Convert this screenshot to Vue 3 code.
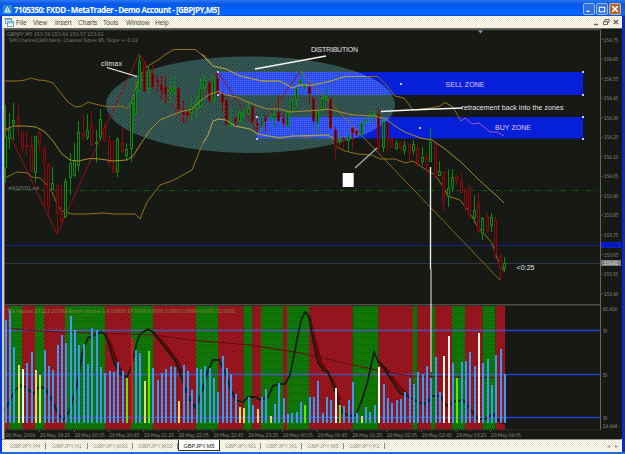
<script setup>
const menus = ['File', 'View', 'Insert', 'Charts', 'Tools', 'Window', 'Help']
const tabs = [
  { name: 'GBPJPY,H4', w: 42 }, { name: 'GBPJPY,H1', w: 42 }, { name: 'GBPJPY,M30', w: 45 },
  { name: 'GBPJPY,M15', w: 45 }, { name: 'GBPJPY,M5', w: 42, active: true },
  { name: 'GBPJPY,M1', w: 41 }, { name: 'GBPJPY,M1', w: 41 }, { name: 'GBPJPY,M5', w: 42 },
  { name: 'GBPJPY,H1', w: 41 },
]

const STEP = 4.345
const barX = (i) => Math.floor(5 + i * STEP) + 0.5

// high, low, body top, body bottom, direction (g / r)
const candles = `105 183 137 168 g|113 149 129 139 g|103 140 120 124 g|104 136 118 127 r|131 153 133 149 r
132 155 145 147 r|137 172 146 171 r|136 183 136 173 g|129 153 133 143 r|147 208 148 163 r
163 217 165 207 r|167 190 183 190 g|184 234 185 214 r|185 226 213 221 r|178 218 181 217 g
153 195 163 178 g|143 177 161 176 g|121 172 132 166 g|115 140 133 136 r|114 140 130 138 g
111 146 126 145 r|130 163 142 144 g|109 140 119 138 g|123 142 128 141 r|136 167 141 163 r
140 173 166 173 r|137 177 139 172 g|128 154 142 152 r|143 160 149 156 g|98 162 103 149 g
80 115 90 114 g|55 92 61 91 g|60 92 63 91 r|65 93 70 89 g|65 88 74 87 r
75 92 80 82 r|76 100 85 90 r|75 104 87 94 r|78 103 88 92 g|77 95 88 93 g
87 112 88 110 r|100 123 111 115 r|108 118 112 115 r|97 120 106 113 g|95 118 102 108 g
78 108 88 107 g|75 92 80 87 g|81 103 83 101 r|75 103 78 100 g|72 97 78 96 r
92 112 93 103 r|95 125 100 124 r|110 127 120 126 g|117 127 118 122 r|110 122 112 121 g
108 122 113 115 g|100 115 108 114 g|106 125 106 122 r|115 133 123 126 r|114 132 117 127 g
115 132 118 121 r|113 122 116 118 g|110 128 115 119 g|95 122 112 121 r|113 127 118 124 r
110 127 112 127 g|98 113 100 112 g|86 107 88 100 g|72 84 80 84 g|84 90 85 88 g
83 104 87 94 r|97 123 98 121 r|110 133 112 123 g|94 112 98 110 g|87 101 97 100 g
97 130 99 128 r|127 159 130 147 r|135 145 139 141 g|137 150 138 140 r|133 151 136 141 g
127 150 128 133 r|130 136 131 134 r|122 137 123 135 g|115 125 120 122 g|111 122 115 117 g
111 122 114 118 g|108 153 114 149 r|119 152 121 148 g|122 152 123 140 r|138 148 138 148 r
140 150 143 149 g|142 150 142 149 r|141 155 145 151 g|143 163 144 153 r|140 155 144 151 g
144 167 148 163 r|147 165 157 162 g|155 174 156 166 r|128 162 142 162 g|142 178 143 177 r
161 176 171 176 g|171 212 172 201 r|169 207 188 197 g|169 192 177 188 g|175 185 176 181 r
171 193 182 193 r|188 212 191 208 r|185 220 187 215 r|195 223 210 218 g|192 233 203 232 r
217 240 218 234 g|213 233 216 231 r|213 232 217 226 g|217 258 220 255 r|253 280 256 268 r
257 272 263 268 g`.split(/[|\n]/).map((row, i) => {
  const [high, low, top, bottom, dir] = row.split(' ')
  return { x: barX(i), high: +high, low: +low, top: +top, bottom: +bottom, dir }
})

// volume bar heights; suffix: w climax, y low volume, l churn, r spike
const volumes = `75 45 155 210y 222w 203 172 225y 240y 165 212 225 150 120 143 63 105 150 147 207 100 105 215 233
228 230 200 228 250l 130r 165 173 258y 168l 220 255 233 222 212 215 318y 210 227 285 220 222 213 220 250 290
183 220 237 298 337y 340y 305 330 342y 305 282 363y 327 265 308 357 355 350 320 330l 305 305 258 353 305 315
278w 330l 333 315 260 355 362y 337 350 330 215w 268 310 325 315 312 290 248 268 230 237 213 250 187 290 183w
122w 203 250l 200 197 170 213 113w 205 192 270 180 162 238`.split(/\s+/).map((v, i) => {
  const y = 295 + Math.round(parseInt(v) / 3)
  return { x: barX(i) - 0.5, y, h: 423 - y, kind: v.replace(/\d/g, '') || 'b' }
})

const edges = [5, 9, 22, 35, 44, 65, 105, 131, 153, 196, 218, 243.5, 252.5, 261, 283, 287, 309, 352.5, 378.5,
  413, 417.5, 431, 435, 452, 465, 482.5, 495.5, 505]
const trends = edges.slice(1).map((x, i) => ({ x: edges[i], w: x - edges[i], up: i % 2 === 1 }))

const prices = Array.from({ length: 14 }, (_, i) => ({
  label: (154.75 - i * 0.1).toFixed(2), y: 41.5 + i * 19.55,
}))
const times = ['28 May 2009', '28 May 19:25', '28 May 20:05', '28 May 20:45', '28 May 21:25', '28 May 22:05',
  '28 May 22:45', '28 May 23:25', '29 May 00:05', '29 May 00:45', '29 May 01:25', '29 May 02:05',
  '29 May 02:45', '29 May 03:25', '29 May 04:05'].map((label, i) => ({ label, x: 5 + i * 34.7 }))
const levels = [{ y: 330.5, label: '70' }, { y: 374.5, label: '50' }, { y: 417.5, label: '30' }]

const upper = '5,81 18,81 25,80 31,78 38,80 45,80.5 53,83 60,92 67,101 75,107 82,106 88,102 95,104 103,106 112,107 120,106 127,108.5 131,102 135,92 139,76 148,66 158,60 166,54 174,49.5 195,49.5 201,54 205,56 213,66 226,69 240,76 262,81 280,81 287,84 292,88 300,85 313,85 331,81 345,76.5 378,76.5 388,87 395,96 404,98 413,110 430,108 440,106 445,102.5 453,107 461,121'
const upperEnd = '461,121 465,118 472,124 479,123 490,132 497,132 504,136'
const middle = '5,130 13,126 25,126 36,127 45,132 53,141 62,154 70,160 78,161 90,158.5 100,159 113,161 127,160 133,156 140,145 150,130 160,120 172,115 180,112 192,109 200,101 210,94 218,91.5 226,95 237,97 245,101 258,106 267,109 280,109 290,112 305,111 320,110 328,109 340,112 353,115 375,116 386,119 395,126 405,132 420,138 432,140 445,149 462,163 478,179 490,190 497,196 504,203'
const lower = '5,178 17,172 28,173 32,177 40,178 46,184 52,192 58,206 62,211 72,214 87,214 103,213 115,214 135,214 140,219 147,202 160,185 174,180 192,170 198,155 203,143 208,135 213,121 219,119 226,120 235,126 250,129 258,134 268,136 280,138 292,136 305,137 315,136 328,135 333,138 337,147 345,151 358,154 372,155 380,159 395,159 405,163 413,161 425,169 435,175 442,185 448,196 460,200 468,210 478,227 492,243 497,258 504,271'
const zigzag = '5,125 57,234 139,54 184,123 218,72 257,131 300,72'
const osc = '5,410 10,400 15,390 22,385 28,389 33,394 40,386 46,390 52,400 58,414 63,420 70,410 77,385 83,350 88,338 95,335 101,332 105,334 109,345 114,363 120,374 127,377 131,368 137,342 140,334 148,329 153,332 162,344 170,354 176,362 183,382 190,400 196,408 203,388 208,370 213,360 219,360 225,372 231,390 236,400 243,402 248,397 255,397 261,400 268,397 273,386 279,384 285,384 290,375 296,345 301,320 305,312 309,316 313,340 318,363 323,370 328,372 333,385 338,402 343,413 350,416 356,415 362,400 368,380 374,352 378,361 385,370 395,386 400,393 410,397 420,403 426,404 432,396 440,396 447,406 455,401 463,400 470,409 478,419 485,419 493,414 500,422 505,424'
const falls = ['105,334 111,345 117,363 122,374 128,376', '153,332 164,344 172,354 178,362 184,378', '309,316 315,340 321,363 327,371 332,380 340,400', '378,361 387,370 397,384 407,395']
const average = '5,328 25,330 60,332 125,334 155,335 190,340 250,345 300,353 340,362 380,371 410,376 450,377 505,378'
</script>

<template>
  <div class="window">
    <header class="titlebar">
      <svg class="logo" width="9" height="9" viewBox="0 0 9 9">
        <rect width="9" height="9" rx="1" fill="#2c8cc8" />
        <path d="M4.5 1L6 4L8 7.5H1L3 4Z" fill="#e8f8ff" />
        <path d="M4.5 3V6M2.5 6H6.5" stroke="#48a8d8" stroke-width=".8" />
      </svg>
      <span class="title">7105350: FXDD - MetaTrader - Demo Account - [GBPJPY,M5]</span>
      <div class="controls">
        <svg class="ctl" viewBox="0 0 11 11"><path d="M3 8H6" stroke="#fff" stroke-width="1.6" /></svg>
        <svg class="ctl" viewBox="0 0 11 11"><path d="M2.5 3.5H8.5M2.5 3V8.5H8.5V3" fill="none" stroke="#fff" stroke-width="1.2" /></svg>
        <svg class="ctl close" viewBox="0 0 11 11"><path d="M2.5 2.5L8.5 8.5M8.5 2.5L2.5 8.5" stroke="#fff" stroke-width="1.7" /></svg>
      </div>
    </header>

    <nav class="menubar">
      <svg class="doc" width="9" height="9" viewBox="0 0 9 9">
        <rect x=".5" y=".5" width="6" height="5" fill="#fff" stroke="#6ba4e0" />
        <rect x="2.5" y="3.5" width="6" height="5" fill="#eef6ff" stroke="#6ba4e0" />
        <path d="M1 1.5H6M3 4.8H8" stroke="#6ba4e0" />
      </svg>
      <span v-for="m in menus" :key="m" class="menu" :class="'menu-' + m.toLowerCase()">{{ m }}</span>
      <svg class="mdi" width="28" height="8" viewBox="0 0 28 8" fill="none" stroke="#666655">
        <path d="M2 6.5H6" stroke-width="1.4" />
        <path d="M13 3V1.5H17V4.5H15.5M11.5 3.5H15.5V6.5H11.5Z" />
        <path d="M22 2L26 6M26 2L22 6" stroke-width="1.3" />
      </svg>
    </nav>

    <svg class="chart" width="618" height="411" viewBox="4 28 618 411">
      <defs>
        <pattern id="oval" width="4" height="4" patternUnits="userSpaceOnUse">
          <rect width="4" height="4" fill="#345650" />
          <path d="M0 0h1v1h-1zM2 2h1v1h-1z" fill="#203440" />
        </pattern>
        <pattern id="ovalZone" width="2" height="2" patternUnits="userSpaceOnUse">
          <rect width="2" height="2" fill="#2c48f4" />
          <path d="M0 0h1v1h-1z" fill="#4870dc" />
        </pattern>
        <pattern id="up" width="4" height="4" patternUnits="userSpaceOnUse">
          <rect width="4" height="4" fill="#068006" />
          <path d="M0 0h1v1h-1zM2 0h1v1h-1zM1 2h1v1h-1zM3 2h1v1h-1z" fill="#284c00" />
        </pattern>
        <pattern id="down" width="4" height="4" patternUnits="userSpaceOnUse">
          <rect width="4" height="4" fill="#8e141c" />
          <path d="M0 0h1v1h-1zM2 2h1v1h-1z" fill="#c41c2c" />
        </pattern>
        <clipPath id="zones"><path d="M217 72H583V95H217ZM257 117H583V138.5H257Z" /></clipPath>
      </defs>

      <rect x="4" y="28" width="618" height="411" fill="#171915" />
      <path d="M4.5 439V28.5H622" class="frame" />
      <path d="M5 29.7H600.5V430M5 304.8H600.5" class="frame" />
      <path d="M478 30.5H483L480.5 33.5Z" fill="#7898d0" />

      <path d="M217 72H583V95H217ZM257 117H583V138.5H257Z" fill="#0520d8" />
      <ellipse cx="250.5" cy="104.7" rx="144.5" ry="48.3" fill="url(#oval)" />
      <ellipse cx="250.5" cy="104.7" rx="144.5" ry="48.3" fill="url(#ovalZone)" clip-path="url(#zones)" />

      <path d="M5 190.5H600" stroke="#0a3420" stroke-dasharray="4 2" />
      <path d="M15 190.5H600" stroke="#1c6c08" stroke-dasharray="1.5 .5 1.5 9.5" />
      <path d="M5 245.5H600" stroke="#0c2cf8" stroke-dasharray="1 1" />
      <path d="M5 263.5H600" stroke="#303846" />

      <g class="thin">
        <polyline :points="zigzag" stroke="#941018" />
        <path d="M300 71L500 280" stroke="#8c6818" />
        <polyline :points="upper" class="band" />
        <polyline :points="upperEnd" stroke="#a058c8" />
        <polyline :points="lower" class="band" />
      </g>
      <g v-for="(c, i) in candles" :key="'c' + i" :class="['candle', c.dir, { solid: i > 29 && i < 90 }]">
        <path :d="`M${c.x} ${c.high}V${c.top}M${c.x} ${c.bottom}V${c.low}`" />
        <rect :x="c.x - 1" :y="c.top + 0.5" width="2" :height="Math.max(c.bottom - c.top - 1, 1)" />
      </g>
      <polyline :points="middle" class="band mid" />
      <!-- bands read lighter over the ellipse -->
      <path d="M201 54L213 66L226 69L240 76L262 81H280L292 88L300 85H313L331 81L345 76.5H366" class="band pale" />
      <path d="M203 143L208 135L213 121L219 119L226 120L235 126L250 129L258 134L280 138L292 136L328 135L333 138" class="band pale" />

      <g class="pointer">
        <path d="M107 67.5L137 76.5M255 69L326 56M381 111.5L410 110L462 108" />
        <path d="M355 168L377 148" stroke="#aaa" />
        <path d="M430.5 167V269" />
        <path d="M431 269V372" stroke="#bab6bc" />
      </g>
      <rect x="342.7" y="173" width="11" height="14" fill="#fff" />
      <path d="M582 71h2v2h-2zM582 94h2v2h-2zM582 116h2v2h-2zM582 138h2v2h-2zM400 83h2v2h-2zM419 127h2v2h-2zM217 71h2v2h-2zM217 94h2v2h-2zM256 116h2v2h-2zM256 138h2v2h-2z" fill="#c8c8ff" />

      <g class="note">
        <text x="101" y="65.5" textLength="21">climax</text>
        <text x="311" y="52" textLength="47">DISTRIBUTION</text>
        <text x="445.5" y="86.5" textLength="39" class="zone">SELL ZONE</text>
        <text x="495" y="130.3" textLength="36" class="zone">BUY ZONE</text>
        <text x="461.5" y="109.7" textLength="102">retracement back into the zones</text>
        <text x="516.5" y="269.5" textLength="18">&lt;0:25</text>
      </g>
      <g class="tiny">
        <text x="7" y="36" textLength="97">GBPJPY,M5  153.59 153.64 153.57 153.61</text>
        <text x="9" y="41.7" textLength="129">SHI Channel(240 bars). Channel Size= 95, Slope = -0.12</text>
        <text x="8" y="190" textLength="31">#9325031 sell</text>
      </g>

      <rect v-for="t in trends" :key="t.x" :x="t.x" y="306" :width="t.w" height="123.5" :fill="t.up ? 'url(#up)' : 'url(#down)'" />
      <polyline v-for="f in falls" :key="f" :points="f" class="fall" />
      <path d="M5 330.5H505M5 374.5H505M5 417.5H505" class="level over" />
      <path d="M505 330.5H600M505 374.5H600M505 417.5H600" class="level" />
      <polyline :points="average" class="average" />
      <polyline :points="osc" class="osc" />
      <rect v-for="v in volumes" :key="v.x" :x="v.x" :y="v.y" width="2" :height="v.h" :class="['vol', v.kind]" />
      <path d="M431 304V372" stroke="#bab6bc" stroke-width="1.5" />
      <path d="M5 430H600.5" stroke="#44443c" stroke-dasharray="1 1" />

      <g class="tiny">
        <text x="7" y="313" class="info" textLength="228">TDI Volume 27.213 27.664  Better Volume 1.4 0.0000 87.0000 0.0000 0.0000 0.0000 0.0000 51.0000</text>
        <g v-for="p in prices" :key="p.label">
          <path :d="`M600 ${p.y - 2}h3`" stroke="#55554c" />
          <text x="603.5" :y="p.y" textLength="15">{{ p.label }}</text>
        </g>
        <text x="602.5" y="311" textLength="15">81.416</text>
        <text v-for="l in levels" :key="l.label" x="602.5" :y="l.y + 2" textLength="5">{{ l.label }}</text>
        <text x="602.5" y="427.5" textLength="15">24.444</text>
        <g v-for="t in times" :key="t.label">
          <path :d="`M${t.x} 430v2`" stroke="#55554c" />
          <text :x="t.x" y="437" textLength="30.5">{{ t.label }}</text>
        </g>
      </g>
      <rect x="601" y="242" width="20" height="6" fill="#0520d8" />
      <text x="603.5" y="247" class="tag bid" textLength="15">153.70</text>
      <rect x="601" y="260" width="20" height="6" fill="#7c7c7c" />
      <text x="603.5" y="265.2" class="tag" textLength="15">153.61</text>
    </svg>

    <footer class="tabs">
      <span v-for="(t, i) in tabs" :key="i" class="tab" :class="{ active: t.active }" :style="{ width: t.w + 'px' }">{{ t.name }}</span>
      <span class="arrows"><i>◂</i><i>▸</i></span>
    </footer>
  </div>
</template>

<style>
body { background: #0a3ee0; overflow: hidden; }
</style>

<style scoped>
.window {
  display: flex; flex-direction: column; box-sizing: border-box;
  width: 625px; height: 454px; padding: 0 3px 2px 2px;
  background: linear-gradient(90deg, #0838dc 0 2px, #d8ccb0 2px 4px, transparent 4px 621px, #f4f4f4 621px 622px, #0828d0 622px) 0 0 / 100% 452px no-repeat, #1c6ce4;
  font-family: "Liberation Sans", Arial, sans-serif;
}
.titlebar {
  display: flex; align-items: center; flex: none; height: 16px; margin: 0 -3px 0 -2px;
  padding: 2px 4px 0 3px; box-sizing: border-box;
  background: linear-gradient(#2c78f0, #0858e8 25%, #0560f8 60%, #0868ff 88%, #0448c8);
}
.title {
  margin-left: 2px; font: bold 8px "Open Sans", "Liberation Sans", sans-serif;
  letter-spacing: -0.49px; color: #fff; white-space: pre;
}
.controls { display: flex; gap: 1px; margin-left: auto; }
.ctl {
  width: 12px; height: 12px; box-sizing: border-box; border: 1px solid #98b8f4;
  border-radius: 2px; background: #3070e4;
}
.ctl.close { background: #aa6838; border-color: #d8b090; }
.menubar {
  display: flex; align-items: center; flex: none; height: 12px; padding: 0 2px 0 3px;
  background: repeating-conic-gradient(#fffff8 0 25%, #eee6d0 0 50%) 0 0 / 2px 2px;
  font-size: 6.6px; color: #48483e;
}
.menu { width: 23px; white-space: nowrap; }
.menu-file { margin-left: 2px; width: 17px; }
.menu-view { width: 22px; }
.menu-charts { width: 25px; }
.menu-window { width: 29px; }
.mdi { margin-left: auto; }
.chart { display: block; flex: none; margin-left: 2px; }
.frame { fill: none; stroke: #66665f; stroke-width: 1; }
.thin { fill: none; stroke-width: 1; }
.band { fill: none; stroke: #94701a; stroke-width: 1; }
.mid { stroke: #a88c2c; }
.pale { stroke: #a4a460; }
.candle { stroke-width: 1; fill: #171915; }
.candle.g { stroke: #088c0c; }
.candle.r { stroke: #8c060a; }
.candle.solid.g { fill: #0a3c10; }
.candle.solid.r { fill: #3c0a10; }
.pointer { fill: none; stroke: #f4f4f4; stroke-width: 1.3; }
.note { font-size: 7px; fill: #e4e4e8; }
.zone { fill: #e0c8ff; }
.tiny { font: 5px "DejaVu Sans", sans-serif; fill: #7c7c74; }
.info { fill: #8c8440; }
.tag { font: 5px "DejaVu Sans", sans-serif; fill: #ddd; }
.tag.bid { fill: #061060; }
.level { stroke: #2040d0; stroke-width: 1.4; }
.level.over { stroke: #5054b0; }
.osc { fill: none; stroke: #10200f; stroke-width: 1.8; }
.fall { fill: none; stroke: #6c0408; stroke-width: 3; }
.average { fill: none; stroke: #6c0c08; stroke-width: 1.2; }
.vol.b { fill: #3c98f0; }
.vol.w { fill: #fff4e8; }
.vol.y { fill: #e0dc70; }
.vol.l { fill: #60e800; }
.vol.r { fill: #e01028; }
.tabs {
  display: flex; flex: none; height: 13px; box-sizing: border-box; padding-left: 2px;
  border-top: 1px solid #999080; margin-right: 1px;
  background: repeating-conic-gradient(#fffff8 0 25%, #ece6d0 0 50%) 0 0 / 2px 2px;
  font-size: 5.7px; line-height: 12px; color: #98958c;
}
.tab { box-sizing: border-box; text-align: center; white-space: nowrap; background: linear-gradient(#8a8a80, #8a8a80) right 3px / 1px 6px no-repeat; }
.tab.active { height: 11px; border: 1px solid #333; border-top: 0; background: #fff; color: #222; }
.arrows { display: flex; gap: 5px; margin-left: auto; padding-right: 3px; }
.arrows i { font-style: normal; }
</style>
